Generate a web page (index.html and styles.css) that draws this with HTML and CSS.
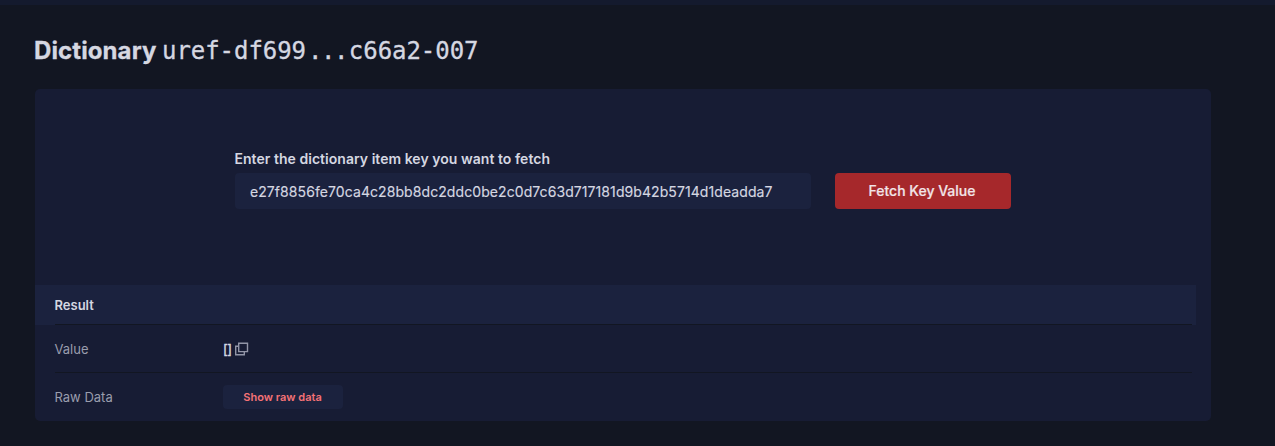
FILE: index.html
```html
<!DOCTYPE html>
<html lang="en">
<head>
<meta charset="utf-8">
<title>Dictionary</title>
<link rel="stylesheet" href="styles.css">
</head>
<body>
<header class="topbar"></header>
<main class="page">
  <h1 class="title"><span class="title-label">Dictionary</span><span class="hash">uref-df699<span class="dots">...</span>c66a2-007</span></h1>
  <section class="panel">
    <form class="form">
      <div class="field">
        <label class="label" for="key">Enter the dictionary item key you want to fetch</label>
        <input class="input" id="key" type="text" value="e27f8856fe70ca4c28bb8dc2ddc0be2c0d7c63d717181d9b42b5714d1deadda7">
      </div>
      <button class="fetch" type="button">Fetch Key Value</button>
    </form>
    <div class="result">
      <div class="result-head"><h2 class="result-title">Result</h2></div>
      <div class="row">
        <span class="name">Value</span>
        <span class="value">[]</span>
        <svg class="copy" viewBox="0 0 14 14" width="14" height="14" fill="none" stroke="currentColor" stroke-width="1.4"><path d="M3.7 1.2h8.8v8.4H3.7z"/><path d="M3.7 4.2H.7v8.6h8.6V9.6"/></svg>
      </div>
      <div class="row row-last">
        <span class="name">Raw Data</span>
        <button class="raw" type="button">Show raw data</button>
      </div>
    </div>
  </section>
</main>
</body>
</html>
```
FILE: styles.css
```css
* { box-sizing: border-box; }

body {
  margin: 0;
  height: 446px;
  overflow: hidden;
  background: #121622;
  color: #d5d7e1;
  font-family: Inter, "Liberation Sans", sans-serif;
}

.topbar { height: 5px; background: #141a2e; }

.page { padding: 28px 64px 0 35px; }

.title {
  display: flex;
  align-items: baseline;
  height: 36px;
  margin: 0 0 20px;
  font-size: 24px;
  line-height: 36px;
  white-space: nowrap;
}

.title-label {
  width: 128px;
  margin-left: -1px;
  font-weight: 700;
  letter-spacing: 0.1px;
  -webkit-text-stroke: 0.3px currentColor;
}

.hash {
  font-family: "DejaVu Sans Mono", monospace;
  font-size: 24px;
  font-weight: 400;
  letter-spacing: -0.05px;
  -webkit-text-stroke: 0.3px currentColor;
}

.dots { margin: 0 2px 0 2px; letter-spacing: -1.5px; }

.panel {
  height: 332px;
  border-radius: 5px;
  background: #171c34;
}

.form {
  display: flex;
  align-items: flex-end;
  gap: 24px;
  height: 120px;
  margin: 0 0 76px 200px;
}

.field { width: 576px; }

.label {
  display: block;
  margin: 0 0 4px -0.5px;
  font-size: 14px;
  font-weight: 600;
  line-height: 20px;
  letter-spacing: 0.035px;
}

.input {
  display: block;
  width: 100%;
  height: 36px;
  padding: 0 15px;
  border: 0;
  border-radius: 4px;
  background: #1b223e;
  color: #d5d7e1;
  font: 400 14px Inter, sans-serif;
  letter-spacing: 0.08px;
  -webkit-text-stroke: 0.15px currentColor;
}

.fetch {
  width: 176px;
  height: 36px;
  padding: 0 2px 1px 0;
  border: 0;
  border-radius: 4px;
  background: #a6282b;
  color: #f1e4e8;
  font: 500 14px Inter, sans-serif;
  -webkit-text-stroke: 0.2px currentColor;
}

.result { width: 1161px; }

.result-head {
  height: 40px;
  padding: 0 4px 0 20px;
  background: #1b223e;
}

.result-title {
  height: 40px;
  margin: 0;
  border-bottom: 1px solid #121622;
  font-size: 13px;
  font-weight: 600;
  line-height: 40px;
  text-indent: -0.5px;
}

.row {
  display: flex;
  align-items: center;
  height: 48px;
  margin: 0 4px 0 20px;
  border-bottom: 1px solid #121622;
  font-size: 13px;
}

.row-last { border-bottom: 0; }

.name { width: 168px; color: #9a9dad; text-indent: -0.5px; }

.value {
  width: 12px;
  letter-spacing: -0.4px;
  -webkit-text-stroke: 0.4px currentColor;
}

.copy { color: #9295a7; }

.raw {
  width: 120px;
  height: 24px;
  padding: 0 1px 0 0;
  border: 0;
  border-radius: 4px;
  background: #1b223e;
  color: #f57276;
  font: 600 11px Inter, sans-serif;
}
```
